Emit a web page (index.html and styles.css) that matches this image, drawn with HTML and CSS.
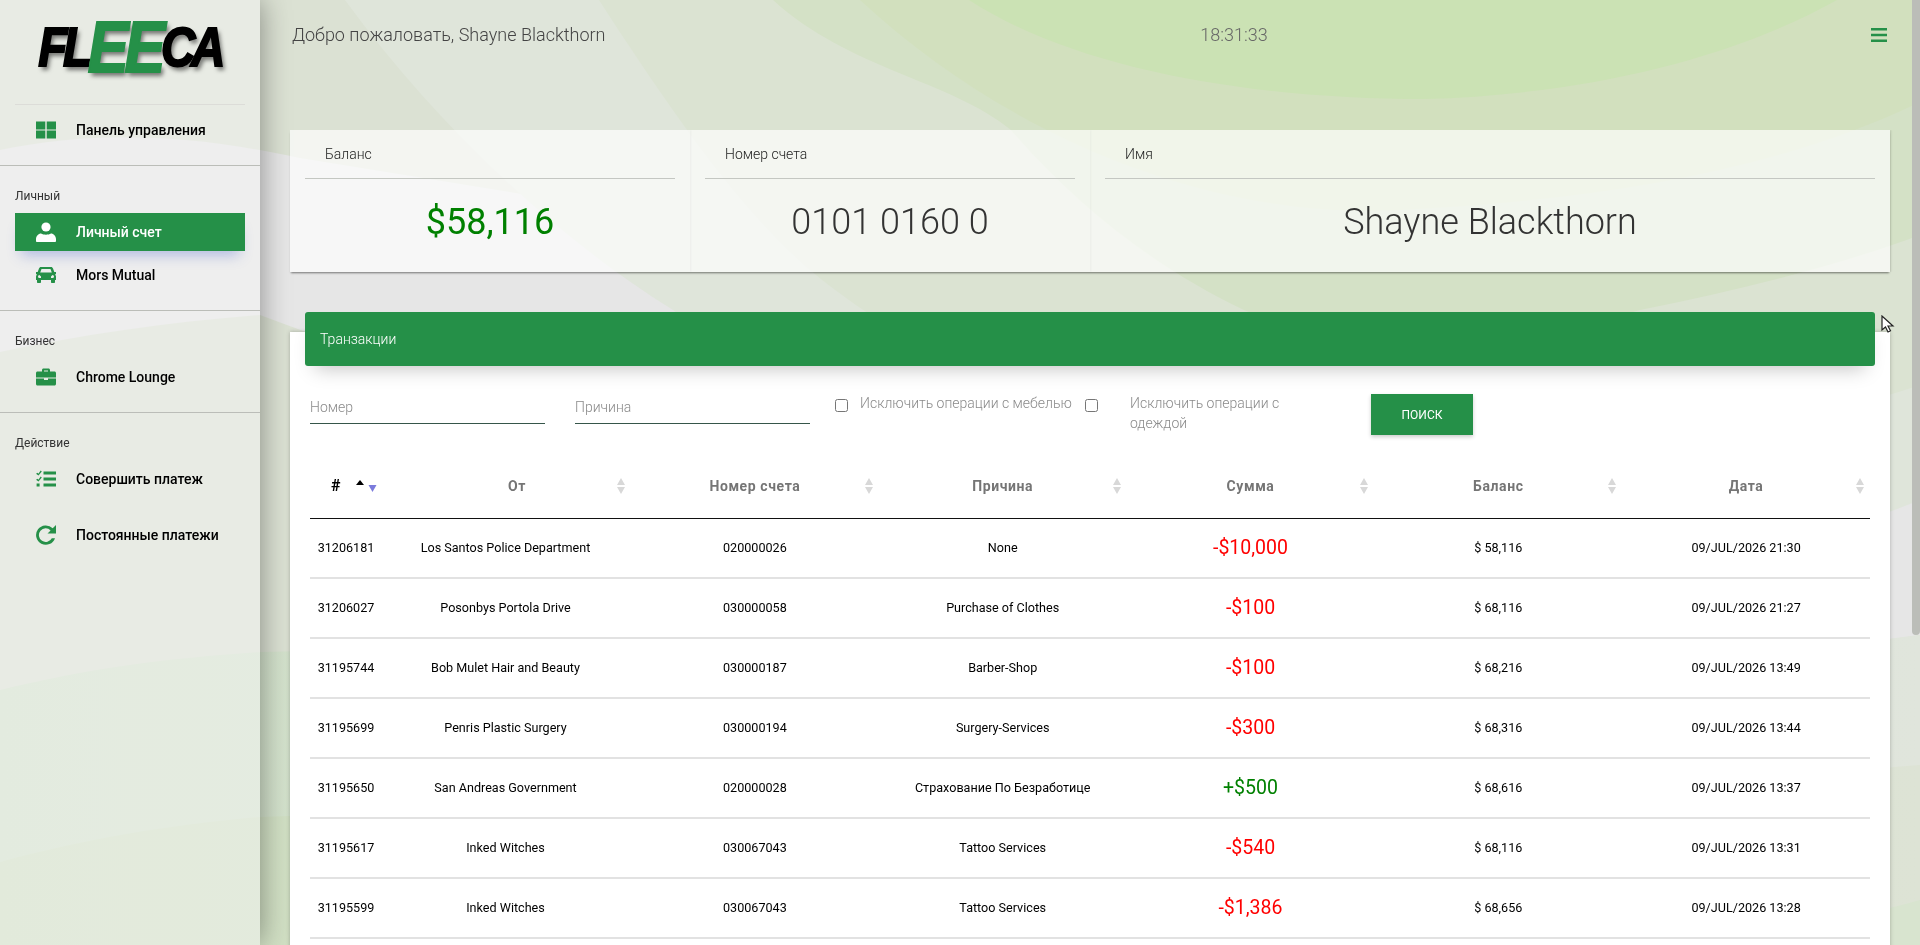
FILE: index.html
```html
<!DOCTYPE html>
<html lang="ru">
<head>
  <meta charset="UTF-8" />
  <meta name="viewport" content="width=device-width, initial-scale=1.0"/>
  <title>Fleeca</title>
  <link rel="stylesheet" href="styles.css">
</head>
<body>
  <svg class="backdrop" viewBox="0 0 1920 945" preserveAspectRatio="none">
    <defs>
      <linearGradient id="low1"><stop offset="0" stop-color="#d1e1c9"/><stop offset="1" stop-color="#e0e5dc"/></linearGradient>
      <linearGradient id="low2"><stop offset="0" stop-color="#cfdfc1"/><stop offset="1" stop-color="#dde3d5"/></linearGradient>
    </defs>
    <rect width="1920" height="945" fill="#dbe1d3"/>
    <!-- grey band -->
    <path d="M0 150C90 132 180 132 300 158L1920 420V635C1500 700 700 480 260 315C170 322 80 335 0 352Z" fill="#e6e6e6"/>
    <!-- lower waves -->
    <path d="M0 690C90 668 170 658 260 652C800 640 1500 690 1920 635V945H0Z" fill="url(#low1)"/>
    <path d="M0 862C90 838 170 825 260 817C800 800 1500 800 1920 765V945H0Z" fill="url(#low2)"/>
    <path d="M1300 945C1500 945 1750 950 1920 900V945Z" fill="#d8e4cf"/>
    <!-- top rings -->
    <path d="M345 0C440 130 560 240 673 310C900 480 1100 590 1300 600C1500 605 1750 570 1920 500V0Z" fill="#dfe5da"/>
    <path d="M599 0C670 110 740 210 810 270C1000 430 1300 470 1500 450C1660 440 1820 420 1920 385V0Z" fill="#dbe3d2"/>
    <path d="M773 0C850 70 950 80 1011 130C1080 210 1160 270 1244 310C1340 350 1500 350 1640 310C1740 290 1840 265 1920 235V0Z" fill="#d4e1c6"/>
    <path d="M860 0C1000 130 1200 220 1400 210C1600 200 1780 170 1920 102V0Z" fill="#d2e0be"/>
    <path d="M969 0C1080 72 1260 99 1424 99C1580 95 1730 60 1837 0Z" fill="#cbe2b4"/>
  </svg>

  <aside class="sidebar">
    <div class="logo"><div class="logo-text">FL<span>EE</span>CA</div></div>
    <a class="nav-item first">
      <svg class="nav-icon" viewBox="0 0 20 17"><path d="M0 0h9.300v8H0zM10.700 0H20v8h-9.300zM0 9h9.300v8H0zM10.700 9H20v8h-9.300z"/></svg>
      Панель управления
    </a>
    <div class="nav-group">
      <div class="nav-label">Личный</div>
      <a class="nav-item active">
        <svg class="nav-icon" viewBox="0 0 20 20"><circle cx="10" cy="5" r="4.600"/><path d="M1 20c-.6 0-1-.5-1-1v-2c0-3 2.500-5.500 5-5.500 1.500.8 3 1.200 5 1.200s3.500-.4 5-1.200c2.500 0 5 2.500 5 5.500v2c0 .5-.4 1-1 1z"/></svg>
        Личный счет
      </a>
      <a class="nav-item">
        <svg class="nav-icon" viewBox="0 0 20 16"><path d="M5 0h10c1 0 1.700.6 2 1.500L18.300 5H20v2l-1 .6c.6.6 1 1.200 1 2V13h-1v2c0 .6-.4 1-1 1h-2c-.6 0-1-.4-1-1v-2H5v2c0 .6-.4 1-1 1H2c-.6 0-1-.4-1-1v-2H0V9.600c0-.8.400-1.400 1-2L0 7V5h1.700L3 1.500C3.300.6 4 0 5 0zm.5 2L4.200 5.600h11.600L14.500 2zM3.500 8a1.500 1.500 0 1 0 0 3h1.500V9.500zM16.500 8L15 9.500V11h1.500a1.500 1.500 0 1 0 0-3z" fill-rule="evenodd"/></svg>
        Mors Mutual
      </a>
    </div>
    <div class="nav-group">
      <div class="nav-label">Бизнес</div>
      <a class="nav-item">
        <svg class="nav-icon" viewBox="0 0 20 17"><path d="M6 3V1.500C6 .7 6.700 0 7.500 0h5C13.300 0 14 .7 14 1.500V3h4.500c.8 0 1.500.7 1.500 1.500V9H0V4.500C0 3.700.7 3 1.500 3zm2-1v1h4V2zM0 10h8v1.500h4V10h8v5.500c0 .8-.7 1.500-1.500 1.500h-17C.7 17 0 16.300 0 15.500z" fill-rule="evenodd"/></svg>
        Chrome Lounge
      </a>
    </div>
    <div class="nav-group">
      <div class="nav-label">Действие</div>
      <a class="nav-item">
        <svg class="nav-icon" viewBox="0 0 20 17"><path d="M7.500 1h12.500v3H7.500zM7.500 7h12.500v3H7.500zM7.500 13h12.500v3H7.500zM1.600 2.300l.8.900L4.700 0l1.100.9L2.500 5 0 3.200zM1.600 8.300l.8.900L4.700 6l1.100.9L2.500 11 0 9.200zM.6 13h3v3h-3z"/></svg>
        Совершить платеж
      </a>
      <a class="nav-item tall">
        <svg class="nav-icon" viewBox="0 0 20 20"><path d="M20 0v8.500h-8.500L14.600 5.400A6.800 6.800 0 1 0 15.800 13.200h3.200A9.700 9.700 0 1 1 16.700 3.300z"/></svg>
        Постоянные платежи
      </a>
    </div>
  </aside>

  <main class="content">
    <header class="topbar">
      <div class="welcome">Добро пожаловать, Shayne Blackthorn</div>
      <div class="clock">18:31:33</div>
      <svg class="menu-icon" viewBox="0 0 16 14"><path d="M0 0h16v2.500H0zM0 5.700h16v2.500H0zM0 11.500h16V14H0z"/></svg>
    </header>

    <section class="stats">
      <div class="stat stat-small">
        <div class="stat-title">Баланс</div>
        <div class="stat-value money">$58,116</div>
      </div>
      <div class="stat stat-small">
        <div class="stat-title">Номер счета</div>
        <div class="stat-value">0101 0160 0</div>
      </div>
      <div class="stat stat-wide">
        <div class="stat-title">Имя</div>
        <div class="stat-value">Shayne Blackthorn</div>
      </div>
    </section>

    <section class="panel">
      <div class="panel-head">Транзакции</div>
      <form class="filters">
        <input class="field" type="text" placeholder="Номер">
        <input class="field field-last" type="text" placeholder="Причина">
        <label class="check check-one"><input type="checkbox"><span>Исключить операции с мебелью</span></label>
        <label class="check check-two"><input type="checkbox"><span>Исключить операции с одеждой</span></label>
        <button class="search" type="button">ПОИСК</button>
      </form>

      <table class="tx">
        <colgroup>
          <col class="c-id"><col class="c-from"><col class="c-rest"><col class="c-rest"><col class="c-rest"><col class="c-rest"><col class="c-rest">
        </colgroup>
        <thead>
          <tr>
            <th class="th-id">#</th>
            <th class="th-from">От</th>
            <th>Номер счета</th>
            <th>Причина</th>
            <th>Сумма</th>
            <th>Баланс</th>
            <th>Дата</th>
          </tr>
        </thead>
        <tbody>
          <tr><td>31206181</td><td>Los Santos Police Department</td><td>020000026</td><td>None</td><td class="amt out">-$10,000</td><td>$ 58,116</td><td>09/JUL/2026 21:30</td></tr>
          <tr><td>31206027</td><td>Posonbys Portola Drive</td><td>030000058</td><td>Purchase of Clothes</td><td class="amt out">-$100</td><td>$ 68,116</td><td>09/JUL/2026 21:27</td></tr>
          <tr><td>31195744</td><td>Bob Mulet Hair and Beauty</td><td>030000187</td><td>Barber-Shop</td><td class="amt out">-$100</td><td>$ 68,216</td><td>09/JUL/2026 13:49</td></tr>
          <tr><td>31195699</td><td>Penris Plastic Surgery</td><td>030000194</td><td>Surgery-Services</td><td class="amt out">-$300</td><td>$ 68,316</td><td>09/JUL/2026 13:44</td></tr>
          <tr><td>31195650</td><td>San Andreas Government</td><td>020000028</td><td>Страхование По Безработице</td><td class="amt in">+$500</td><td>$ 68,616</td><td>09/JUL/2026 13:37</td></tr>
          <tr><td>31195617</td><td>Inked Witches</td><td>030067043</td><td>Tattoo Services</td><td class="amt out">-$540</td><td>$ 68,116</td><td>09/JUL/2026 13:31</td></tr>
          <tr><td>31195599</td><td>Inked Witches</td><td>030067043</td><td>Tattoo Services</td><td class="amt out">-$1,386</td><td>$ 68,656</td><td>09/JUL/2026 13:28</td></tr>
        </tbody>
      </table>
    </section>
  </main>

  <div class="scroll-thumb"></div>
  <svg class="cursor" viewBox="0 0 14 18"><path d="M1 1v14l3.500-3 2.500 5 2.500-1.200L7 11h5z" fill="#fff" stroke="#222" stroke-width="1.200"/></svg>
</body>
</html>
```

FILE: styles.css
```css
html {
  background: #dbe1d3;
}

body {
  margin: 0;
  font-family: Roboto, sans-serif;
  color: #333;
  display: flex;
}

.backdrop {
  position: fixed;
  top: 0;
  left: 0;
  width: 100%;
  height: 945px;
}

.scroll-thumb {
  position: fixed;
  top: 0;
  right: 0;
  width: 8px;
  height: 635px;
  background: #bbbdb8;
  border-radius: 0 0 4px 4px;
}

.cursor {
  position: fixed;
  left: 1881px;
  top: 315px;
  width: 14px;
  height: 18px;
}

/* sidebar */
.sidebar {
  position: fixed;
  top: 0;
  left: 0;
  bottom: 0;
  width: 260px;
  background: rgba(245, 245, 245, 0.5);
  box-shadow: 0 0 28px rgba(0, 0, 0, 0.4);
  color: #000;
}

.logo {
  height: 105px;
  margin: 0 15px;
  border-bottom: 1px solid #dcdcd8;
  display: flex;
  justify-content: center;
  box-sizing: border-box;
}

.logo-text {
  margin-top: 19px;
  height: 56px;
  font-family: "Liberation Sans", sans-serif;
  font-size: 56px;
  line-height: 56px;
  font-weight: 700;
  font-style: italic;
  letter-spacing: -5px;
  white-space: nowrap;
  color: #000;
  -webkit-text-stroke: 2px #000;
  text-shadow: 3px 4px 5px rgba(0, 0, 0, 0.5);
  transform: scaleX(0.85);
}

.logo-text span {
  color: #259048;
  -webkit-text-stroke: 2px #259048;
  font-size: 72px;
  line-height: 0;
  vertical-align: -6px;
}

.nav-item {
  display: flex;
  align-items: center;
  height: 38px;
  margin: 0 15px;
  padding-left: 21px;
  font-size: 14px;
  font-weight: 500;
  color: #000;
}

.nav-item.first {
  height: 60px;
  padding-bottom: 10px;
  box-sizing: border-box;
}

.nav-item.active {
  background: #259048;
  color: #fff;
  box-shadow: 0 10px 14px -6px rgba(60, 90, 200, 0.35);
  margin-bottom: 5px;
}

.nav-item.tall {
  margin-top: 18px;
}

.nav-icon {
  width: 20px;
  height: 20px;
  margin-right: 20px;
  fill: #259048;
  flex: none;
}

.active .nav-icon {
  fill: #fff;
}

.nav-group {
  border-top: 1px solid #bbbdb8;
  padding-top: 22px;
  padding-bottom: 16px;
}

.nav-group:last-child {
  padding-bottom: 0;
}

.nav-label {
  margin: 0 15px 8px;
  font-size: 12px;
  line-height: 17px;
  color: #333;
}

/* main */
.content {
  position: relative;
  margin-left: 260px;
  flex: 1;
  padding: 0 30px;
  min-width: 0;
}

.topbar {
  display: grid;
  grid-template-columns: 800px 284px 1fr;
  align-items: center;
  height: 69px;
  padding-left: 2px;
  font-size: 18px;
  font-weight: 300;
  color: #444;
  margin-bottom: 61px;
}

.clock {
  text-align: center;
  color: #666;
}

.menu-icon {
  justify-self: end;
  width: 16px;
  height: 14px;
  fill: #259048;
  margin-right: 3px;
}

.stats {
  display: flex;
  height: 142px;
  margin-bottom: 60px;
  box-shadow: 0 2px 2px -1px rgba(0, 0, 0, 0.5);
}

.stat {
  background: rgba(255, 255, 255, 0.68);
  padding: 0 15px;
  box-sizing: border-box;
  border-right: 0;
  box-shadow: 1px 0 2px rgba(0, 0, 0, 0.13);
  clip-path: inset(0 -3px 0 0);
}

.stat-small {
  width: 400px;
}

.stat-wide {
  flex: 1;
}

.stat-title {
  height: 48px;
  line-height: 48px;
  padding-left: 20px;
  font-size: 14px;
  font-weight: 300;
  color: #222;
  border-bottom: 1px solid #c4c7c2;
}

.stat-value {
  text-align: center;
  font-size: 36px;
  font-weight: 300;
  line-height: 86px;
  color: #333;
}

.money {
  color: #008000;
  font-weight: 400;
}

.panel {
  position: relative;
  background: #fff;
  min-height: 1040px;
  padding: 0 15px;
  box-shadow: 0 0 4px rgba(0, 0, 0, 0.25);
}

.panel-head {
  position: relative;
  top: -20px;
  height: 54px;
  line-height: 54px;
  padding-left: 15px;
  background: #259048;
  color: #fff;
  font-size: 14px;
  font-weight: 300;
  border-radius: 3px;
  box-shadow: 0 12px 20px -10px rgba(0, 0, 0, 0.25);
}

.filters {
  display: flex;
  align-items: flex-start;
  margin-top: 8px;
  padding-left: 5px;
  height: 59px;
}

.field {
  width: 235px;
  height: 33px;
  margin: -4px 30px 0 0;
  padding: 0;
  border: 0;
  border-bottom: 1px solid #36564a;
  background: transparent;
  font: 300 14px Roboto, sans-serif;
  box-sizing: content-box;
}

.field-last {
  margin-right: 25px;
}

.field::placeholder {
  color: #8a8a8a;
}

.check {
  display: flex;
  align-items: flex-start;
  font-size: 14px;
  font-weight: 300;
  line-height: 20px;
  color: #8a8a8a;
  margin-top: -1px;
}

.check input {
  margin: 6px 0 0 0;
  width: 13px;
  height: 13px;
  flex: none;
}

.check-one {
  width: 250px;
}

.check-one span {
  margin-left: 12px;
  white-space: nowrap;
}

.check-two {
  width: 286px;
}

.check-two span {
  margin-left: 32px;
  width: 175px;
}

.search {
  width: 102px;
  height: 41px;
  border: 0;
  background: #259048;
  color: #fff;
  font: 400 12px Roboto, sans-serif;
  box-shadow: 0 2px 4px rgba(0, 0, 0, 0.2);
}

.tx {
  width: 1560px;
  margin-left: 5px;
  border-collapse: collapse;
  table-layout: fixed;
  font-size: 12.6px;
  color: #000;
  text-align: center;
}

.c-id {
  width: 70px;
}

.c-from {
  width: 251px;
}

.c-rest {
  width: 247.800px;
}

.tx th {
  height: 65px;
  padding: 0;
  border-bottom: 1px solid #111;
  font-size: 14px;
  font-weight: 700;
  letter-spacing: 0.6px;
  color: #757575;
  background: no-repeat right 6px center / 8px 16px url("data:image/svg+xml,%3Csvg xmlns='http://www.w3.org/2000/svg' viewBox='0 0 8 16'%3E%3Cpath d='M4 0l4 7H0zM0 9h8l-4 7z' fill='%23d8d8d8'/%3E%3C/svg%3E");
}

.tx th.th-id {
  padding-right: 18px;
  color: #000;
  font-size: 16px;
  background: no-repeat 46px center / 21px 12px url("data:image/svg+xml,%3Csvg xmlns='http://www.w3.org/2000/svg' viewBox='0 0 21 12'%3E%3Cpath d='M0 5l4-5 4 5z' fill='%23000'/%3E%3Cpath d='M12.500 5h8l-4 7z' fill='%237b7bdc'/%3E%3C/svg%3E");
}

.tx th.th-from {
  padding-left: 23px;
}

.tx td {
  height: 57px;
  padding: 0 0 1px;
  border-bottom: 2px solid #e2e2e2;
}

.tx td:first-child {
  padding-left: 2px;
}

.tx td.amt {
  font-size: 19.500px;
  padding-bottom: 2px;
  height: 56px;
}

.out {
  color: #f00;
}

.in {
  color: #008000;
}
```
